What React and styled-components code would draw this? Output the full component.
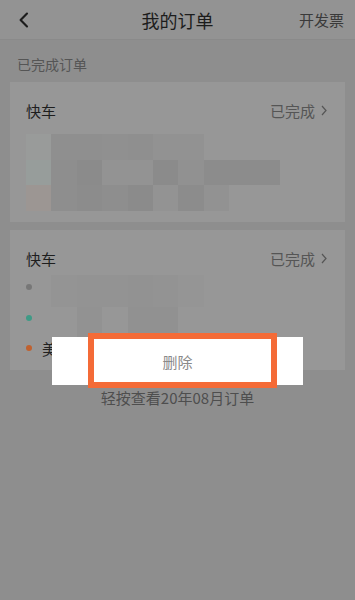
import React from "react";
import styled, { createGlobalStyle } from "styled-components";

const GlobalStyle = createGlobalStyle`
  html, body {
    margin: 0;
    padding: 0;
    background: #8e8e8e;
    font-family: "Noto Sans CJK SC", "Noto Sans", sans-serif;
  }
`;

// mosaic rows: null = empty cell
const firstMosaic = [
  ["#999b9a", "#8f8f8f", "#8f8f8f", "#909090", "#8f8f8f", "#929292", "#929292", null, null, null],
  ["#979d9b", "#8e8e8e", "#8b8b8b", "#939393", "#939393", "#8b8b8b", "#919191", "#8c8c8c", "#8c8c8c", "#8c8c8c"],
  ["#9c9693", "#8e8e8e", "#8c8c8c", "#8e8e8e", "#8b8b8b", "#939393", "#8c8c8c", "#929292", null, null],
];

const secondMosaic = [
  [null, "#949494", "#939393", "#939393", "#929292", "#939393", "#959595", null],
  [null, null, "#929292", null, "#919191", "#919191", null, null],
];

const Page = styled.div`
  position: relative;
  width: 355px;
  height: 600px;
  background: #8e8e8e;
  overflow: hidden;
`;

const Header = styled.div`
  height: 40px;
  display: grid;
  grid-template-columns: 60px 1fr 60px;
  align-items: center;
  background: #939393;
  border-bottom: 1px solid #8a8a8a;
  box-sizing: border-box;
`;

const Back = styled.div`
  padding-left: 19px;
  display: flex;
  align-items: center;
`;

const Title = styled.div`
  text-align: center;
  font-size: 18px;
  color: #1c1c1c;
`;

const Invoice = styled.div`
  font-size: 15px;
  color: #3a3a3a;
  text-align: right;
  padding-right: 11px;
  white-space: nowrap;
`;

const SectionLabel = styled.div`
  font-size: 14px;
  color: #555;
  padding: 14px 0 0 17px;
  height: 28px;
  line-height: 20px;
`;

const List = styled.div`
  display: flex;
  flex-direction: column;
  gap: 8px;
  padding: 0 10px;
`;

const Card = styled.div`
  background: #979797;
  height: ${(p) => p.h}px;
  padding: 16px 16px 0 16px;
  box-sizing: border-box;
`;

const CardHead = styled.div`
  display: flex;
  justify-content: space-between;
  align-items: center;
  height: 24px;
`;

const CarType = styled.div`
  font-size: 15px;
  color: #1e1e1e;
`;

const Status = styled.div`
  display: flex;
  align-items: center;
  gap: 6px;
  font-size: 15px;
  color: #555;
  padding-right: 2px;
`;

const Mosaic = styled.div`
  margin-top: ${(p) => p.top}px;
  display: grid;
  grid-template-columns: repeat(${(p) => p.cols}, 25.4px);
  grid-auto-rows: ${(p) => p.row}px;
`;

const Cell = styled.div`
  background: ${(p) => p.c || "transparent"};
`;

const Stops = styled.div`
  position: relative;
`;

const StopList = styled.div`
  position: absolute;
  left: 0;
  top: -3px;
  display: flex;
  flex-direction: column;
`;

const Stop = styled.div`
  height: 30.5px;
  display: flex;
  align-items: center;
  gap: 10px;
  font-size: 15px;
  color: #222;
`;

const Dot = styled.span`
  width: 6px;
  height: 6px;
  border-radius: 50%;
  background: ${(p) => p.c};
`;

const Hint = styled.div`
  text-align: center;
  font-size: 15px;
  color: #4e4e4e;
  margin-top: 17px;
`;

const Sheet = styled.div`
  position: absolute;
  left: 52px;
  top: 337px;
  width: 251px;
  height: 48px;
  background: #fff;
  display: flex;
  align-items: center;
  justify-content: center;
`;

const SheetText = styled.div`
  font-size: 15px;
  color: #8a8a8a;
`;

const Highlight = styled.div`
  position: absolute;
  left: 88px;
  top: 333px;
  width: 189px;
  height: 55px;
  border: 6px solid #f46b37;
  box-sizing: border-box;
`;

const Chevron = ({ size = 14, color = "#222", w = 2 }) => (
  <svg width={size * 0.6} height={size} viewBox="0 0 9 15">
    <path d="M7.5 1.5 L1.5 7.5 L7.5 13.5" fill="none" stroke={color} strokeWidth={w} strokeLinecap="round" strokeLinejoin="round" />
  </svg>
);

const SmallArrow = () => (
  <svg width="6" height="11" viewBox="0 0 6 11">
    <path d="M1 1 L5 5.5 L1 10" fill="none" stroke="#555" strokeWidth="1.2" />
  </svg>
);

const App = () => {
  return (
    <Page>
      <GlobalStyle />
      <Header>
        <Back>
          <Chevron size={16} color="#1c1c1c" w={2} />
        </Back>
        <Title>我的订单</Title>
        <Invoice>开发票</Invoice>
      </Header>
      <SectionLabel>已完成订单</SectionLabel>
      <List>
        <Card h={140}>
          <CardHead>
            <CarType>快车</CarType>
            <Status>
              已完成 <SmallArrow />
            </Status>
          </CardHead>
          <Mosaic top={12} cols={10} row={25.5}>
            {firstMosaic.flat().map((c, i) => (
              <Cell key={i} c={c} />
            ))}
          </Mosaic>
        </Card>
        <Card h={140}>
          <CardHead>
            <CarType>快车</CarType>
            <Status>
              已完成 <SmallArrow />
            </Status>
          </CardHead>
          <Stops>
            <Mosaic top={5} cols={8} row={32}>
              {secondMosaic.flat().map((c, i) => (
                <Cell key={i} c={c} />
              ))}
            </Mosaic>
            <StopList>
              <Stop>
                <Dot c="#777" />
              </Stop>
              <Stop>
                <Dot c="#3f9a86" />
              </Stop>
              <Stop>
                <Dot c="#c0612f" />
                美
              </Stop>
            </StopList>
          </Stops>
        </Card>
      </List>
      <Hint>轻按查看20年08月订单</Hint>
      <Sheet>
        <SheetText>删除</SheetText>
      </Sheet>
      <Highlight />
    </Page>
  );
};

export default App;
